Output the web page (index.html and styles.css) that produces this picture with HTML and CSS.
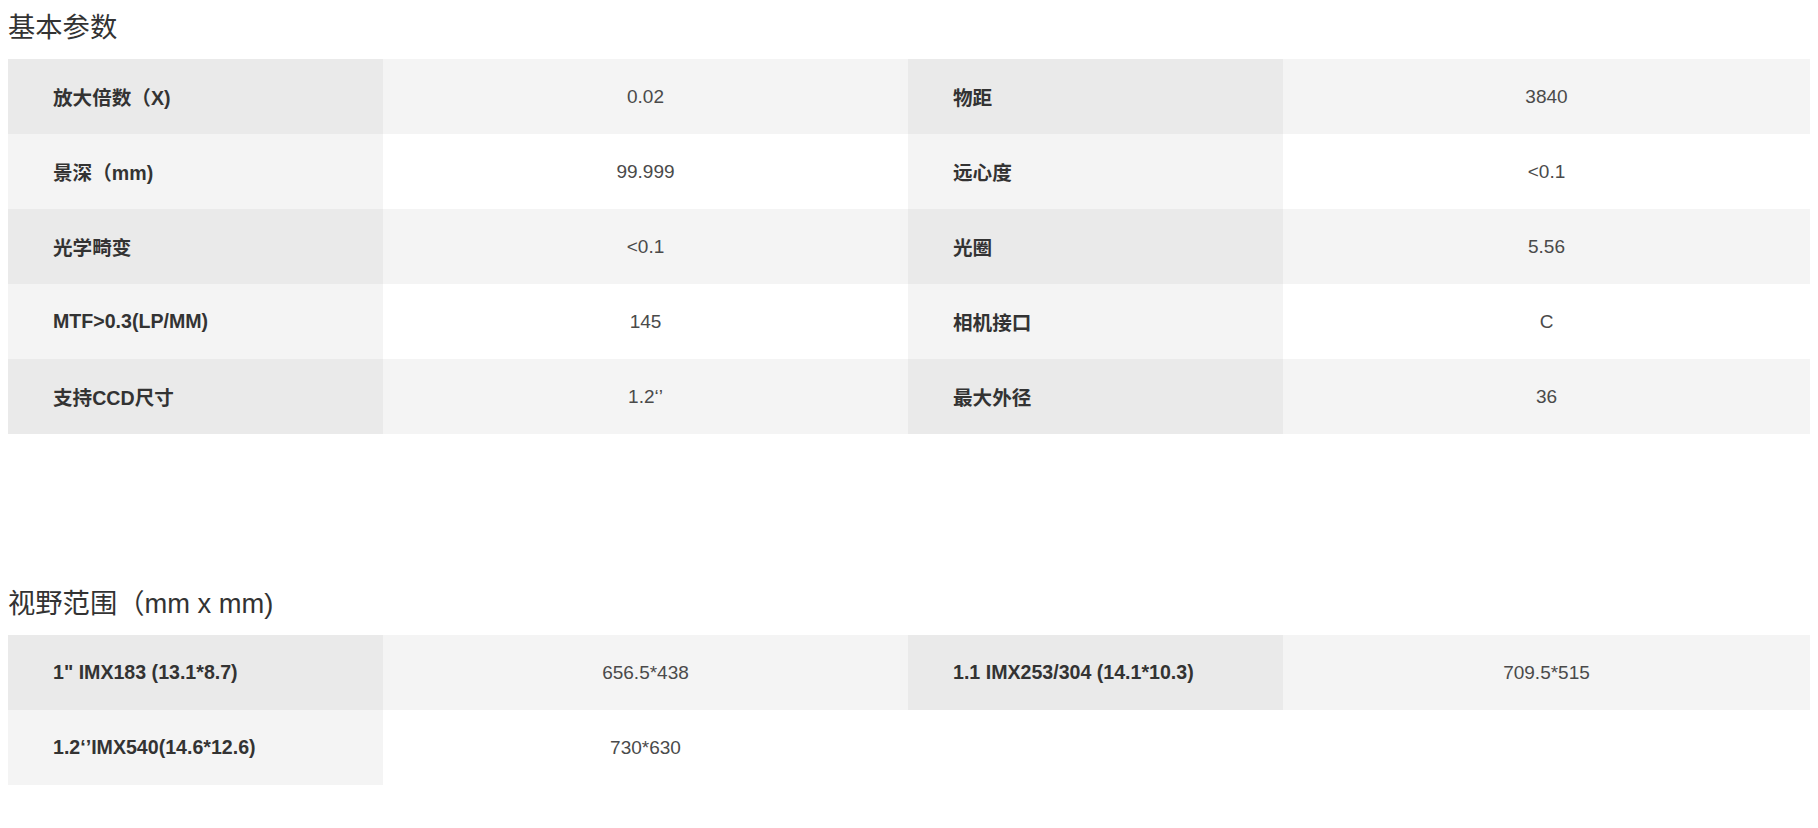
FILE: index.html
```html
<!DOCTYPE html>
<html lang="zh-CN">
<head>
<meta charset="utf-8">
<title>参数</title>
<link rel="stylesheet" href="styles.css">
</head>
<body>
<h2 class="title">基本参数</h2>
<div class="table">
  <div class="row odd">
    <div class="cell label">放大倍数（X)</div><div class="cell value">0.02</div>
    <div class="cell label">物距</div><div class="cell value">3840</div>
  </div>
  <div class="row even">
    <div class="cell label">景深（mm)</div><div class="cell value">99.999</div>
    <div class="cell label">远心度</div><div class="cell value">&lt;0.1</div>
  </div>
  <div class="row odd">
    <div class="cell label">光学畸变</div><div class="cell value">&lt;0.1</div>
    <div class="cell label">光圈</div><div class="cell value">5.56</div>
  </div>
  <div class="row even">
    <div class="cell label">MTF&gt;0.3(LP/MM)</div><div class="cell value">145</div>
    <div class="cell label">相机接口</div><div class="cell value">C</div>
  </div>
  <div class="row odd">
    <div class="cell label">支持CCD尺寸</div><div class="cell value">1.2‘’</div>
    <div class="cell label">最大外径</div><div class="cell value">36</div>
  </div>
</div>

<h2 class="title title-second">视野范围（mm x mm)</h2>
<div class="table">
  <div class="row odd">
    <div class="cell label">1" IMX183 (13.1*8.7)</div><div class="cell value">656.5*438</div>
    <div class="cell label">1.1 IMX253/304 (14.1*10.3)</div><div class="cell value">709.5*515</div>
  </div>
  <div class="row even">
    <div class="cell label">1.2‘’IMX540(14.6*12.6)</div><div class="cell value">730*630</div>
    <div class="cell empty"></div><div class="cell empty"></div>
  </div>
</div>
</body>
</html>
```

FILE: styles.css
```css
html, body {
  background: #ffffff;
}
body {
  margin: 8px;
  font-family: "Liberation Sans", "Noto Sans CJK SC", sans-serif;
  color: #333333;
}
.title {
  margin: 0 0 11px 0;
  font-family: "Liberation Sans", "Noto Sans CJK SC", sans-serif;
  font-size: 27.3px;
  font-weight: normal;
  line-height: 40px;
  color: #333333;
}
.title-second {
  margin-top: 150px;
}
.table {
  display: flex;
  flex-direction: column;
}
.row {
  display: grid;
  grid-template-columns: 375px 525px 375px 1fr;
  height: 75px;
}
.cell {
  display: flex;
  align-items: center;
  font-size: 19px;
}
.label {
  padding-left: 45px;
  font-size: 19.6px;
  font-weight: bold;
  color: #333333;
}
.value {
  justify-content: center;
  color: #4a4a4a;
}
.odd .label { background: #eaeaea; }
.odd .value { background: #f4f4f4; }
.even .label { background: #f4f4f4; }
.even .value { background: #ffffff; }
.even .empty { background: #ffffff; }
```
